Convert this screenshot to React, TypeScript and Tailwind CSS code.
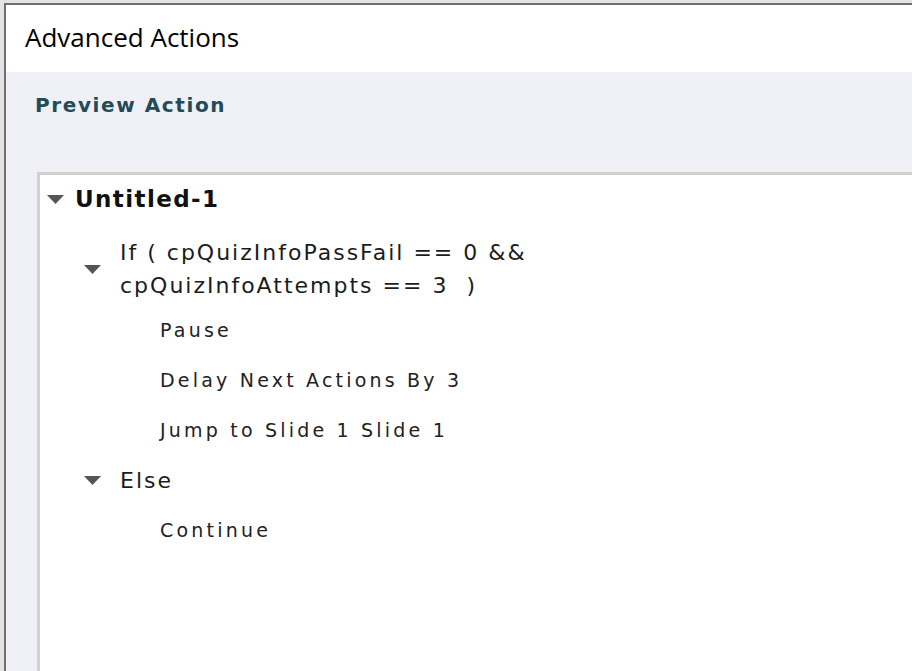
const Caret = () => (
  <svg width="17" height="9" viewBox="0 0 17 9" className="shrink-0">
    <path d="M0 0h17L8.5 9z" fill="#555555" />
  </svg>
)

const actionText = "font-['DejaVu_Sans',sans-serif] text-[19px] leading-[24px] tracking-[3.2px] text-[#222222]"
const condText = "font-['DejaVu_Sans',sans-serif] text-[22px] leading-[33px] tracking-[2px] text-[#1c1c1c]"

export default function App() {
  return (
    <div className="h-[671px] w-[912px] overflow-hidden bg-[#e3e3e3] pl-[4px] pt-[3px]">
      <div className="flex h-full flex-col border-l-2 border-t-2 border-[#6e6e6e] bg-white">
        {/* Title */}
        <div className="h-[67px] shrink-0 pl-[19px] pt-[15px] font-['Open_Sans',sans-serif] text-[26px] leading-[35px] text-black">
          Advanced Actions
        </div>

        {/* Panel */}
        <div className="flex flex-1 flex-col bg-[#eff0f5]">
          <div className="mb-[55px] pl-[29px] pt-[22px] font-['DejaVu_Sans',sans-serif] text-[20px] font-bold leading-[23px] tracking-[1.6px] text-[#224b57]">
            Preview Action
          </div>

          <div className="ml-[31px] flex-1 border-l-[3px] border-t-[3px] border-[#d0d0d0] bg-white pl-[7px]">
            {/* Untitled-1 */}
            <div className="mt-[10px] flex h-[28px] items-center">
              <Caret />
              <span className="ml-[11px] font-['DejaVu_Sans',sans-serif] text-[23px] font-bold leading-[28px] tracking-[1.4px] text-[#111111]">
                Untitled-1
              </span>
            </div>

            {/* If */}
            <div className="ml-[37px] mt-[23px] flex items-center">
              <Caret />
              <div className={`ml-[19px] ${condText}`}>
                <div>If ( cpQuizInfoPassFail == 0 &amp;&amp;</div>
                <div className="whitespace-pre">cpQuizInfoAttempts == 3  )</div>
              </div>
            </div>

            <div className="ml-[113px]">
              <div className={`mt-[16px] ${actionText}`}>Pause</div>
              <div className={`mt-[26px] ${actionText}`}>Delay Next Actions By 3</div>
              <div className={`mt-[26px] ${actionText}`}>Jump to Slide 1 Slide 1</div>
            </div>

            {/* Else */}
            <div className="ml-[37px] mt-[24px] flex h-[28px] items-center">
              <Caret />
              <span className={`ml-[19px] ${condText} leading-[28px]`}>Else</span>
            </div>

            <div className="ml-[113px]">
              <div className={`mt-[24px] ${actionText}`}>Continue</div>
            </div>
          </div>
        </div>
      </div>
    </div>
  )
}
